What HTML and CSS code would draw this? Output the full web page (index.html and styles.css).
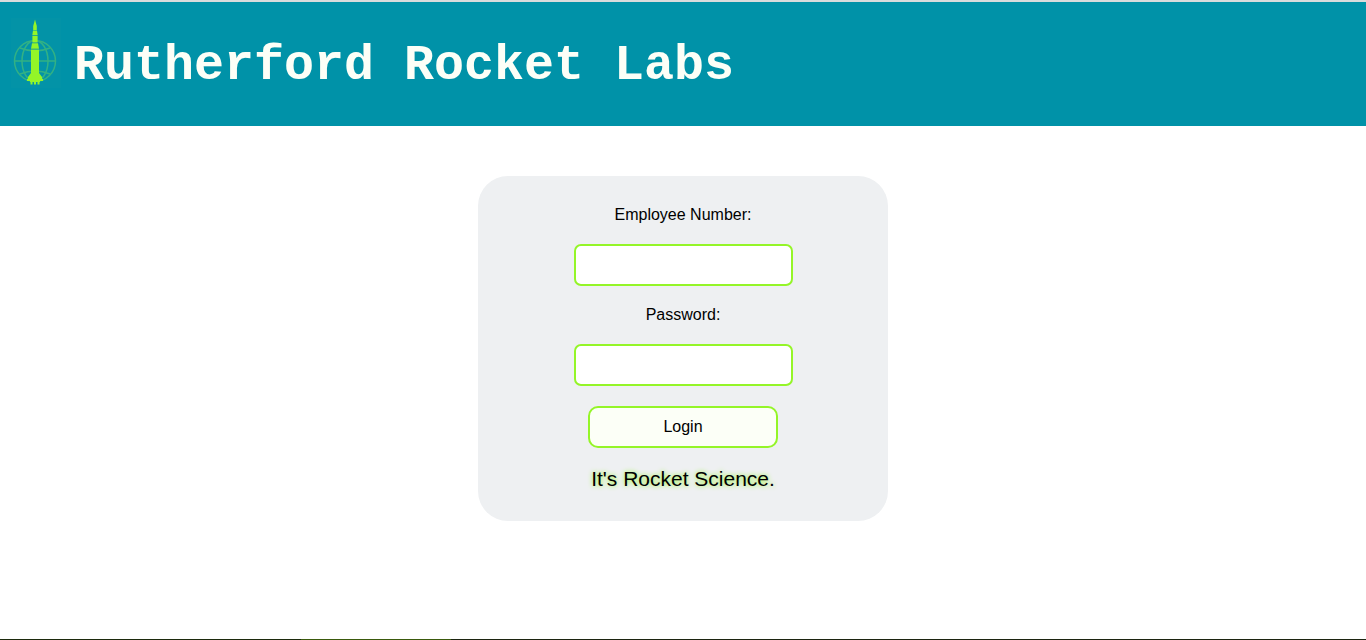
FILE: index.html
```html
<!DOCTYPE html>
<html lang="en">
<head>
<meta charset="utf-8">
<title>Rutherford Rocket Labs</title>
<link rel="stylesheet" href="styles.css">
</head>
<body>
<header class="banner">
  <svg class="logo" viewBox="0 0 50 70" aria-hidden="true">
    <rect width="50" height="70" fill="#0393a7"/>
    <g fill="none" stroke="#32b184" stroke-width="1.5">
      <circle cx="24" cy="43" r="20.5"/>
      <ellipse cx="24" cy="43" rx="13" ry="20.500"/>
      <path d="M3.500 43h41M9 30Q24 36 39 30M9 56Q24 50 39 56"/>
    </g>
    <g fill="#94f528">
      <path d="M24 1.500l.8 3 1 3.500v4h-3.600V8l1-3.500zM22 12.500h4l.7 4.800h-5.400zM21.400 18h5.200v6.500h-5.200zM21 25.300h6l1 5.500h-8zM20 31.800h8v23.200l3 4v2h1v2h-3v1H19v-1h-3v-2h1v-2l3-4z"/>
      <path d="M19.500 64h2v2.500h-2zM23 64h2v2.500h-2zM26.500 64h2v2.500h-2z"/>
    </g>
    <path d="M20 31.300h8" stroke="#4cc06a" stroke-width="1"/>
  </svg>
  <h1 class="title">Rutherford Rocket Labs</h1>
</header>
<main class="page">
  <form class="card">
    <label class="label" for="employee">Employee Number:</label>
    <input class="field" id="employee" type="text">
    <label class="label" for="password">Password:</label>
    <input class="field" id="password" type="password">
    <button class="login" type="button">Login</button>
    <p class="tagline">It's Rocket Science.</p>
  </form>
</main>
<footer class="footer"></footer>
</body>
</html>
```

FILE: styles.css
```css
* { box-sizing: border-box; }
body {
  margin: 0;
  min-height: 100vh;
  display: flex;
  flex-direction: column;
  background: #fff;
  color: #000;
  font: 16px/20px "Liberation Sans", Arial, sans-serif;
}
.banner {
  display: flex;
  align-items: flex-start;
  gap: 13px;
  padding: 16px 11px 30px;
  border-top: 2px solid #d9dcdc;
  background: #0092a8;
}
.logo { width: 50px; height: 70px; flex: none; }
.title {
  margin: 18px 0 0;
  font: bold 50px/60px "Courier New", "Liberation Mono", monospace;
  color: #fcfff7;
}
.page {
  flex: 1;
  display: flex;
  justify-content: center;
  align-items: flex-start;
  padding: 50px 16px;
}
.card {
  width: 100%;
  max-width: 410px;
  display: flex;
  flex-direction: column;
  align-items: center;
  padding: 29px 20px 30px;
  border-radius: 30px;
  background: #eef0f2;
}
.label { margin-bottom: 19px; }
.field {
  width: 219px;
  height: 42px;
  margin-bottom: 19px;
  padding: 8px;
  border: 2px solid #94f528;
  border-radius: 7px;
  background: #fff;
  font: inherit;
}
.login {
  width: 190px;
  height: 42px;
  margin: 1px 0 19px;
  border: 2px solid #94f528;
  border-radius: 10px;
  background: #fcfff7;
  color: #000;
  font: inherit;
}
.tagline {
  margin: 0;
  font-size: 21px;
  line-height: 24px;
  text-shadow: 0 0 5px #94f528;
}
.footer {
  height: 1px;
  background: linear-gradient(to right, #1c2a0c 22%, #3a5a0c 22%, #3a5a0c 33%, #1c2410 33%);
}
```
